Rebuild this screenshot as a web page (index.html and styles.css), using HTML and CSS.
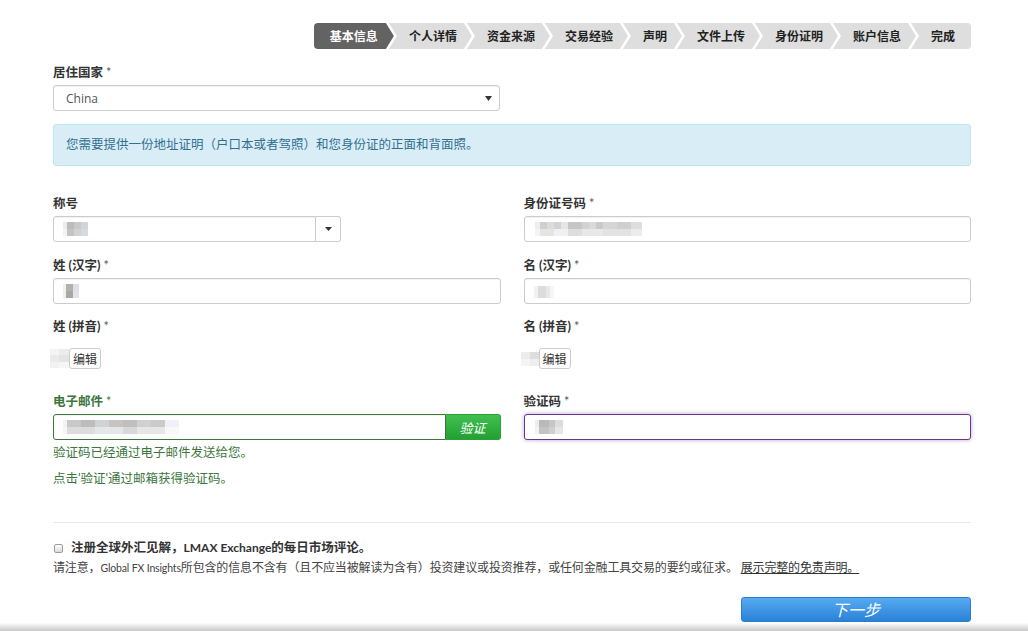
FILE: index.html
```html
<!DOCTYPE html>
<html lang="zh-CN">
<head>
<meta charset="utf-8">
<title>基本信息</title>
<link rel="stylesheet" href="styles.css">
</head>
<body>
<div class="page">
  <ol class="steps">
    <li class="step first active">基本信息</li>
    <li class="step">个人详情</li>
    <li class="step">资金来源</li>
    <li class="step">交易经验</li>
    <li class="step">声明</li>
    <li class="step">文件上传</li>
    <li class="step">身份证明</li>
    <li class="step">账户信息</li>
    <li class="step last">完成</li>
  </ol>

  <div class="country">
    <label class="lbl">居住国家 <span class="req">*</span></label>
    <div class="field select">
      <span class="val">China</span>
      <svg class="arrow" width="7" height="5" viewBox="0 0 7 5"><path d="M0 0H7L3.5 5Z" fill="#333"/></svg>
    </div>
  </div>

  <div class="alert">您需要提供一份地址证明（户口本或者驾照）和您身份证的正面和背面照。</div>

  <div class="row r1">
    <div class="group">
      <label class="lbl">称号</label>
      <div class="combo">
        <div class="field combo-field"><span class="blur b-title"></span></div>
        <div class="caret-btn"><svg width="7" height="4" viewBox="0 0 7 4"><path d="M0 0H7L3.5 4Z" fill="#333"/></svg></div>
      </div>
    </div>
    <div class="group">
      <label class="lbl">身份证号码 <span class="req">*</span></label>
      <div class="field"><span class="blur b-id"></span></div>
    </div>
  </div>

  <div class="row r2">
    <div class="group">
      <label class="lbl">姓 (汉字) <span class="req">*</span></label>
      <div class="field"><span class="blur b-sur"></span></div>
    </div>
    <div class="group">
      <label class="lbl">名 (汉字) <span class="req">*</span></label>
      <div class="field"><span class="blur b-given"></span></div>
    </div>
  </div>

  <div class="row r3">
    <div class="group">
      <label class="lbl">姓 (拼音) <span class="req">*</span></label>
      <div class="static"><span class="blur b-py1"></span><button class="edit" type="button">编辑</button></div>
    </div>
    <div class="group">
      <label class="lbl">名 (拼音) <span class="req">*</span></label>
      <div class="static"><span class="blur b-py2"></span><button class="edit" type="button">编辑</button></div>
    </div>
  </div>

  <div class="row r4">
    <div class="group">
      <label class="lbl ok">电子邮件 <span class="req">*</span></label>
      <div class="combo">
        <div class="field success"><span class="blur b-mail"></span></div>
        <button class="verify" type="button">验证</button>
      </div>
      <p class="help">验证码已经通过电子邮件发送给您。</p>
      <p class="help second">点击'验证'通过邮箱获得验证码。</p>
    </div>
    <div class="group">
      <label class="lbl">验证码 <span class="req">*</span></label>
      <div class="field focus"><span class="blur b-code"></span></div>
    </div>
  </div>

  <hr class="sep">

  <div class="sub">
    <input class="chk" type="checkbox">
    <span>注册全球外汇见解，<span class="brand">LMAX Exchange</span>的每日市场评论。</span>
  </div>
  <p class="disclaimer">请注意，<span class="latin">Global FX Insights</span>所包含的信息不含有（且不应当被解读为含有）投资建议或投资推荐，或任何金融工具交易的要约或征求。 <a class="more" href="#">展示完整的免责声明。 </a></p>

  <div class="next-row">
    <button class="next" type="button">下一步</button>
  </div>
</div>
<div class="shade"></div>
</body>
</html>
```

FILE: styles.css
```css
html, body {
  margin: 0;
  padding: 0;
  background: #fff;
  overflow: hidden;
}
body {
  font-family: "Lato", "Noto Sans CJK SC", sans-serif;
  font-size: 12.5px;
  color: #333;
}
.page {
  width: 918px;
  padding: 23px 0 0 53px;
}

/* steps */
.steps {
  list-style: none;
  margin: 0;
  padding: 0;
  display: flex;
  justify-content: flex-end;
  height: 26px;
}
.step {
  background: #dedede;
  color: #222;
  font: bold 12px/26px "Noto Sans CJK SC", sans-serif;
  padding: 0 15px 0 20px;
  margin-left: -5px;
  white-space: nowrap;
  clip-path: polygon(0 0, calc(100% - 8px) 0, 100% 50%, calc(100% - 8px) 100%, 0 100%, 8px 50%);
}
.step.first {
  margin-left: 0;
  padding-left: 16px;
  padding-right: 16px;
  border-radius: 4px 0 0 4px;
  clip-path: polygon(0 0, calc(100% - 8px) 0, 100% 50%, calc(100% - 8px) 100%, 0 100%);
}
.step.last {
  padding-right: 16px;
  border-radius: 0 4px 4px 0;
  clip-path: polygon(0 0, 100% 0, 100% 100%, 0 100%, 8px 50%);
}
.step.active {
  background: #636363;
  color: #fff;
}

/* labels & fields */
.lbl {
  display: block;
  font-weight: bold;
  line-height: 18px;
  padding-top: 1px;
  margin-bottom: 3px;
  color: #333;
}
.req {
  font-weight: normal;
  color: #555;
}
.lbl.ok { color: #3c763d; }
.lbl.ok .req { color: #3c763d; }

.country {
  width: 447px;
  margin-top: 14px;
}
.field {
  box-sizing: border-box;
  height: 26px;
  border: 1px solid #ccc;
  border-radius: 3px;
  background: #fff;
  box-shadow: inset 0 1px 1px rgba(0, 0, 0, .06);
  display: flex;
  align-items: center;
  padding: 0 9px;
}
.select {
  justify-content: space-between;
  padding: 0 7px 0 12px;
}
.select .val {
  font-family: "Open Sans", sans-serif;
  font-size: 12px;
  color: #555;
}
.arrow { display: block; }

.alert {
  margin-top: 13px;
  border: 1px solid #bce8f1;
  background: #d9edf7;
  color: #31708f;
  border-radius: 3px;
  padding: 11px 12px;
  line-height: 18px;
}

.row {
  display: grid;
  grid-template-columns: 1fr 1fr;
  column-gap: 23px;
}
.r1 { margin-top: 28px; }
.r2 { margin-top: 14px; }
.r3 { margin-top: 13px; }
.r4 { margin-top: 23px; }

.combo {
  display: flex;
}
.combo-field {
  width: 263px;
  border-radius: 3px 0 0 3px;
}
.caret-btn {
  box-sizing: border-box;
  width: 25px;
  height: 26px;
  border: 1px solid #ccc;
  border-left: 0;
  border-radius: 0 3px 3px 0;
  background: #fff;
  display: flex;
  align-items: center;
  justify-content: center;
}
.caret-btn svg { display: block; }

.static {
  display: flex;
  align-items: center;
  height: 21px;
  padding-top: 9px;
}
.edit {
  font-family: "Noto Sans CJK SC", sans-serif;
  font-size: 12px;
  line-height: 19px;
  height: 21px;
  padding: 0 3px;
  border: 1px solid #ccc;
  border-radius: 3px;
  background: #fff;
  color: #333;
  margin: 0;
}

.success {
  flex: 1;
  border-color: #3c763d;
  border-radius: 3px 0 0 3px;
}
.verify {
  width: 55px;
  height: 26px;
  margin: 0;
  border: 1px solid #28a236;
  border-left: 0;
  border-radius: 0 3px 3px 0;
  background: linear-gradient(#41bf50, #24a033);
  color: #fff;
  font-family: "Noto Sans CJK SC", sans-serif;
  font-size: 13px;
  font-style: italic;
  padding: 0;
}
.focus {
  border-color: #6b358f;
  box-shadow: 0 0 4px rgba(107, 53, 143, .45);
}

.help {
  margin: 4px 0 0;
  line-height: 18px;
  color: #3c763d;
}
.help.second { margin-top: 8px; }

/* blurred values */
.blur {
  display: inline-block;
  height: 14px;
}
.b-title {
  width: 25px;
  background:
    linear-gradient(90deg, #ececec 0 4px, #bcbcbc 4px 11px, #c9c9c9 11px 18px, #d0d5da 18px) top/100% 7px no-repeat,
    linear-gradient(90deg, #f3f3f3 0 4px, #c4c4c4 4px 11px, #d2d2d2 11px 18px, #d6dade 18px) bottom/100% 7px no-repeat;
}
.b-id {
  width: 107px;
  margin-left: 1px;
  background:
    linear-gradient(90deg, #eee 0 5px, #cfcfcf 5px 12px, #dcdcdc 12px 19px, #cdd3d8 19px 26px, #e6e6e6 26px 33px, #c6c6c6 33px 47px, #d2d2d2 47px 54px, #dadada 54px 61px, #cacaca 61px 68px, #d6d6d6 68px 82px, #cfcfcf 82px 96px, #dedede 96px) top/100% 7px no-repeat,
    linear-gradient(90deg, #f4f4f4 0 5px, #e4e4e4 5px 19px, #eef0f2 19px 33px, #dedede 33px 47px, #e8e8e8 47px 68px, #e2e2e2 68px 96px, #ececec 96px) bottom/100% 7px no-repeat;
}
.b-sur {
  width: 16px;
  background:
    linear-gradient(90deg, #f0f0f0 0 3px, #b4b0ae 3px 10px, #dde1e6 10px) top/100% 7px no-repeat,
    linear-gradient(90deg, #f0f0f0 0 3px, #aaa6a4 3px 10px, #e0e4ea 10px) bottom/100% 7px no-repeat;
}
.b-given {
  width: 20px;
  height: 12px;
  margin-top: 2px;
  background: linear-gradient(90deg, #f2f2f2 0 4px, #dcdcdc 4px 12px, #e8e8e8 12px 16px, #f6f6f6 16px);
}
.b-py1 {
  width: 19px;
  height: 19px;
  margin-left: -3px;
  background:
    linear-gradient(90deg, #f4f4f4 0 9px, #ececec 9px) top/100% 6px no-repeat,
    linear-gradient(90deg, #eaeaea 0 9px, #e4e4e4 9px) center/100% 7px no-repeat,
    linear-gradient(90deg, #f2f2f2 0 9px, #f6f6f6 9px) bottom/100% 6px no-repeat;
}
.b-py2 {
  width: 18px;
  height: 14px;
  margin-left: -3px;
  background:
    linear-gradient(90deg, #ececec 0 9px, #dedede 9px) top/100% 7px no-repeat,
    linear-gradient(90deg, #f4f4f4 0 9px, #eeeeee 9px) bottom/100% 7px no-repeat;
}
.b-mail {
  width: 116px;
  background:
    linear-gradient(90deg, #f2f2f2 0 4px, #c8c8c8 4px 18px, #bdbdbd 18px 32px, #cfd3d6 32px 46px, #c8c2c0 46px 60px, #bfbfbf 60px 74px, #d0d0d0 74px 88px, #cdc9c9 88px 102px, #f0f0f6 102px) top/100% 7px no-repeat,
    linear-gradient(90deg, #f6f6f6 0 4px, #dcdcdc 4px 32px, #e4e6e8 32px 60px, #d8d8d8 60px 74px, #e6e6e6 74px 102px, #f8f8f8 102px) bottom/100% 7px no-repeat;
}
.b-code {
  width: 28px;
  margin-left: 1px;
  background:
    linear-gradient(90deg, #eee 0 4px, #b9b9b9 4px 14px, #c6c6c6 14px 20px, #dcdcdc 20px) top/100% 7px no-repeat,
    linear-gradient(90deg, #f3f3f3 0 4px, #c3c3c3 4px 14px, #cfcfcf 14px 20px, #e6e6e6 20px) bottom/100% 7px no-repeat;
}

/* bottom */
.sep {
  margin: 34px 0 0;
  border: 0;
  border-top: 1px solid #e8e8e8;
  height: 0;
}
.sub {
  display: flex;
  align-items: center;
  margin-top: 15px;
  line-height: 20px;
  font-weight: bold;
  color: #333;
}
.brand {
  font-size: 12px;
}
.chk {
  appearance: none;
  -webkit-appearance: none;
  box-sizing: border-box;
  width: 9px;
  height: 9px;
  margin: 0 8px 0 1px;
  border: 1px solid #9c9c9c;
  border-radius: 2px;
  background: linear-gradient(#fcfcfc, #dcdcdc);
}
.disclaimer {
  margin: 0;
  font-size: 12px;
  line-height: 20px;
  color: #444;
  letter-spacing: -0.15px;
}
.latin {
  font-size: 10.5px;
}
.more {
  color: #333;
  text-decoration: underline;
}
.next-row {
  display: flex;
  justify-content: flex-end;
  margin-top: 19px;
}
.next {
  width: 230px;
  height: 25px;
  margin: 0;
  padding: 0;
  border: 1px solid #2b7dd0;
  border-radius: 3px;
  background: linear-gradient(#56aaf1, #2a82d8);
  color: #fff;
  font-family: "Noto Sans CJK SC", sans-serif;
  font-size: 16px;
  font-style: italic;
  line-height: 23px;
}
.shade {
  height: 8px;
  margin-top: 1px;
  background: linear-gradient(#fdfdfd, #c8c8c8);
}
```
